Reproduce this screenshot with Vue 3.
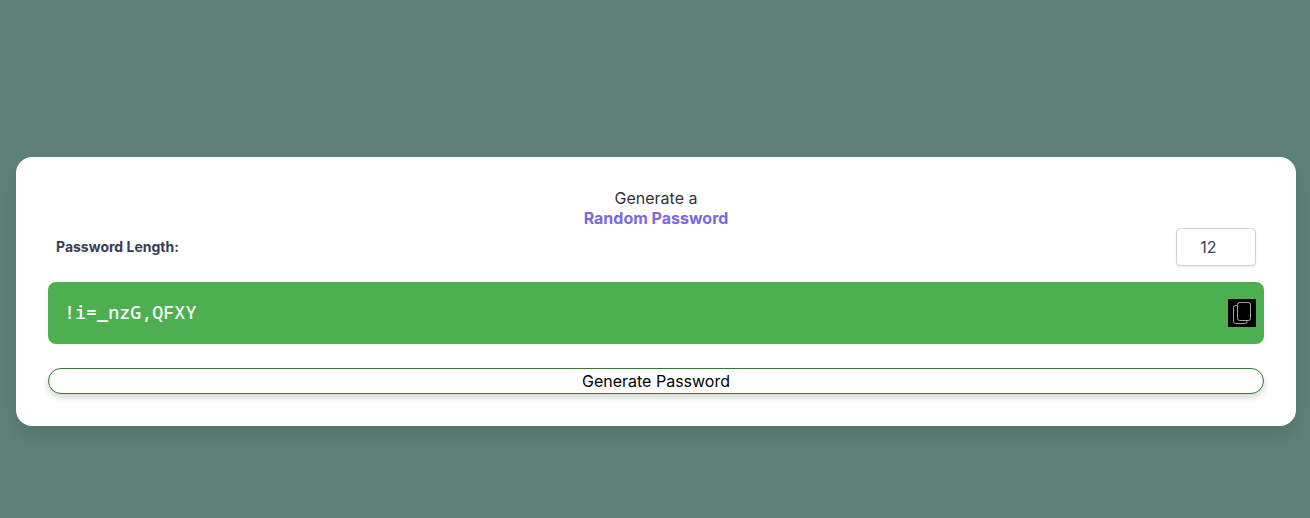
<script setup>
import { ref } from 'vue'

const length = ref(12)
const password = ref('!i=_nzG,QFXY')

const alphabet =
  'ABCDEFGHIJKLMNOPQRSTUVWXYZabcdefghijklmnopqrstuvwxyz0123456789!@#$%^&*()_+=-,.'

function generate() {
  password.value = Array.from(
    { length: Number(length.value) || 0 },
    () => alphabet[Math.floor(Math.random() * alphabet.length)]
  ).join('')
}

function copy() {
  navigator.clipboard?.writeText(password.value)
}
</script>

<template>
  <main class="page">
    <section class="card">
      <h1 class="title">Generate a<br /><span class="accent">Random Password</span></h1>
      <div class="length-row">
        <label class="length-label" for="length">Password Length:</label>
        <input id="length" v-model="length" class="length-input" type="text" inputmode="numeric" />
      </div>
      <div class="output">
        <span class="password">{{ password }}</span>
        <button class="copy" type="button" aria-label="Copy" @click="copy">
          <svg width="28" height="28" viewBox="0 0 28 28" fill="none" stroke="#b4b4b4" stroke-width="0.9">
            <rect x="9.5" y="3.5" width="13" height="18" rx="2" />
            <path d="M9.5 6.5H7.5a2 2 0 0 0-2 2v14a2 2 0 0 0 2 2H17a2 2 0 0 0 2-2v-1" />
          </svg>
        </button>
      </div>
      <button class="generate" type="button" @click="generate">Generate Password</button>
    </section>
  </main>
</template>

<style>
body {
  background: #5d8079;
}
</style>

<style scoped>
.page {
  box-sizing: border-box;
  height: 518px;
  padding: 157px 14px 0 16px;
  overflow: hidden;
  background: #5d8079;
  font-family: Inter, "Liberation Sans", sans-serif;
}

.card {
  box-sizing: border-box;
  height: 269px;
  padding: 31px 32px 32px;
  border-radius: 16px;
  background: #fff;
  box-shadow: 0 10px 20px rgba(0, 0, 0, 0.1);
}

.title {
  margin: 0;
  font-size: 16px;
  line-height: 20px;
  font-weight: 400;
  text-align: center;
  color: #333;
}

.accent {
  font-weight: 700;
  color: #7b68e6;
}

.length-row {
  display: flex;
  align-items: center;
  justify-content: space-between;
  height: 38px;
  margin: 0 8px 16px;
}

.length-label {
  font-size: 14px;
  font-weight: 700;
  line-height: 18px;
  color: #3a3d52;
}

.length-input {
  box-sizing: border-box;
  width: 80px;
  height: 38px;
  padding: 0 15px 0 0;
  border: 1px solid #d1d5db;
  border-radius: 4px;
  background: #fff;
  box-shadow: 0 1px 2px rgba(0, 0, 0, 0.1);
  font: 16px/24px Inter, "Liberation Sans", sans-serif;
  text-align: center;
  color: #374151;
  outline: none;
}

.output {
  box-sizing: border-box;
  display: flex;
  align-items: center;
  justify-content: space-between;
  height: 62px;
  padding: 0 8px 0 16px;
  border-radius: 8px;
  background: #4caf50;
}

.password {
  padding-bottom: 2px;
  font-family: "Noto Sans Mono", "DejaVu Sans Mono", monospace;
  font-size: 18.4px;
  font-weight: 500;
  line-height: 28px;
  color: #fff;
}

.copy {
  display: flex;
  width: 28px;
  height: 28px;
  padding: 0;
  border: 0;
  background: #000;
}

.generate {
  box-sizing: border-box;
  display: block;
  width: 100%;
  height: 26px;
  margin-top: 24px;
  padding: 0;
  border: 1px solid #357a38;
  border-radius: 13px;
  background: #fff;
  box-shadow: 0 4px 6px rgba(0, 0, 0, 0.15);
  font: 16px/24px Inter, "Liberation Sans", sans-serif;
  text-align: center;
  color: #000;
}
</style>
